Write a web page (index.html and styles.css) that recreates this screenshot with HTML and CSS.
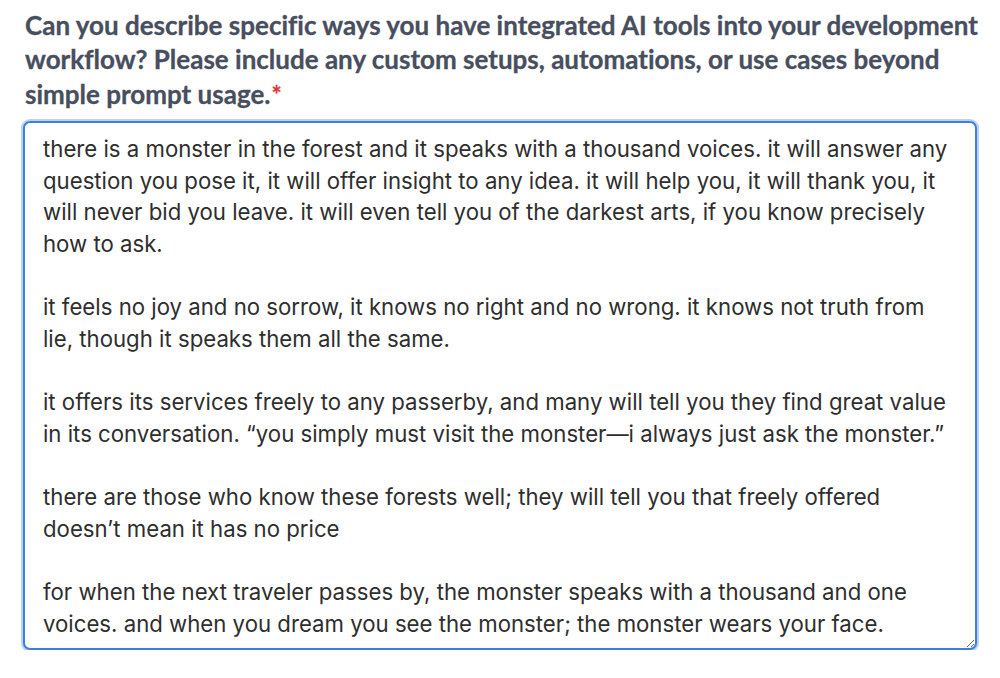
FILE: index.html
```html
<!DOCTYPE html>
<html>
<head>
<meta charset="utf-8">
<link rel="stylesheet" href="styles.css">
</head>
<body>
<div class="field">
<label class="question" for="answer">Can you describe specific ways you have integrated AI tools into your development workflow? Please include any custom setups, automations, or use cases beyond simple prompt usage.<span class="req">*</span></label>
<textarea id="answer" class="answer">there is a monster in the forest and it speaks with a thousand voices. it will answer any question you pose it, it will offer insight to any idea. it will help you, it will thank you, it will never bid you leave. it will even tell you of the darkest arts, if you know precisely how to ask.

it feels no joy and no sorrow, it knows no right and no wrong. it knows not truth from lie, though it speaks them all the same.

it offers its services freely to any passerby, and many will tell you they find great value in its conversation. “you simply must visit the monster—i always just ask the monster.”

there are those who know these forests well; they will tell you that freely offered doesn’t mean it has no price

for when the next traveler passes by, the monster speaks with a thousand and one voices. and when you dream you see the monster; the monster wears your face.</textarea>
</div>
</body>
</html>
```
FILE: styles.css
```css
html, body { margin: 0; padding: 0; background: #fff; }
.field { padding: 8px 20px 0 25px; display: flex; flex-direction: column; }
.question {
  font-family: Lato, sans-serif;
  font-weight: 700;
  font-size: 26px;
  line-height: 34.3px;
  color: #474e5e;
  font-variant-ligatures: none;
  -webkit-text-stroke: 0.3px #474e5e;
  margin-bottom: 10px;
}
.req { color: #d83a3a; font-size: 24px; line-height: 1; margin-left: 1px; -webkit-text-stroke: 0.3px #d83a3a; }
.answer {
  margin-left: -2px;
  box-sizing: border-box;
  width: 954px;
  height: 529px;
  border: 2px solid #3f7fdc;
  border-radius: 7px;
  box-shadow: 0 0 0 2px #b9d2f5;
  padding: 10px 18px;
  font-family: Inter, sans-serif;
  font-size: 22.2px;
  line-height: 31.67px;
  color: #2e2e2e;
  outline: none;
  overflow: hidden;
  background: #fff;
}
```
